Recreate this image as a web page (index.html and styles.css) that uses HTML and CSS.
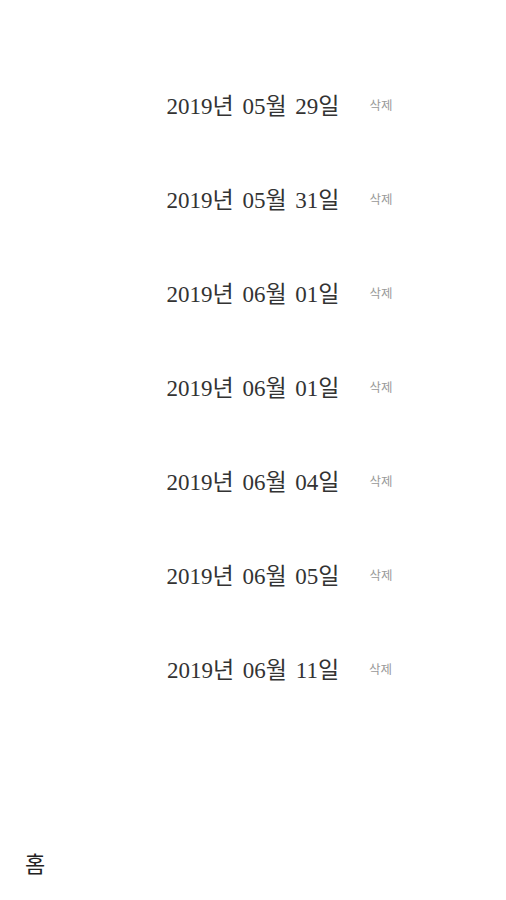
FILE: index.html
```html
<!DOCTYPE html>
<html lang="ko">
<head>
<meta charset="utf-8">
<link rel="stylesheet" href="styles.css">
</head>
<body>
<main class="page">
  <ul class="list">
    <li class="row"><span class="date">2019년 05월 29일</span><button class="del">삭제</button></li>
    <li class="row"><span class="date">2019년 05월 31일</span><button class="del">삭제</button></li>
    <li class="row"><span class="date">2019년 06월 01일</span><button class="del">삭제</button></li>
    <li class="row"><span class="date">2019년 06월 01일</span><button class="del">삭제</button></li>
    <li class="row"><span class="date">2019년 06월 04일</span><button class="del">삭제</button></li>
    <li class="row"><span class="date">2019년 06월 05일</span><button class="del">삭제</button></li>
    <li class="row"><span class="date">2019년 06월 11일</span><button class="del">삭제</button></li>
  </ul>
  <nav class="nav"><span class="home">홈</span></nav>
</main>
</body>
</html>
```
FILE: styles.css
```css
html, body {
  margin: 0;
  padding: 0;
  background: #fff;
}
body {
  font-family: "Liberation Serif", "Noto Sans CJK KR", serif;
  color: #222;
}
.page {
  width: 506px;
  height: 900px;
  display: flex;
  flex-direction: column;
}
.list {
  list-style: none;
  margin: 0;
  padding: 57px 0 0;
}
.row {
  height: 94px;
  display: grid;
  grid-template-columns: 1fr auto 1fr;
  align-items: center;
}
.date {
  grid-column: 2;
  font-size: 23px;
  word-spacing: 3px;
  color: #333;
}
.del {
  grid-column: 3;
  justify-self: start;
  margin-left: 30px;
  background: none;
  border: none;
  padding: 0;
  font-family: "Noto Sans CJK KR", sans-serif;
  font-size: 12.5px;
  color: #999;
}
.nav {
  margin-top: auto;
  padding: 0 0 22px 25px;
}
.home {
  font-family: "Noto Sans CJK KR", sans-serif;
  font-size: 22px;
  color: #222;
}
```
